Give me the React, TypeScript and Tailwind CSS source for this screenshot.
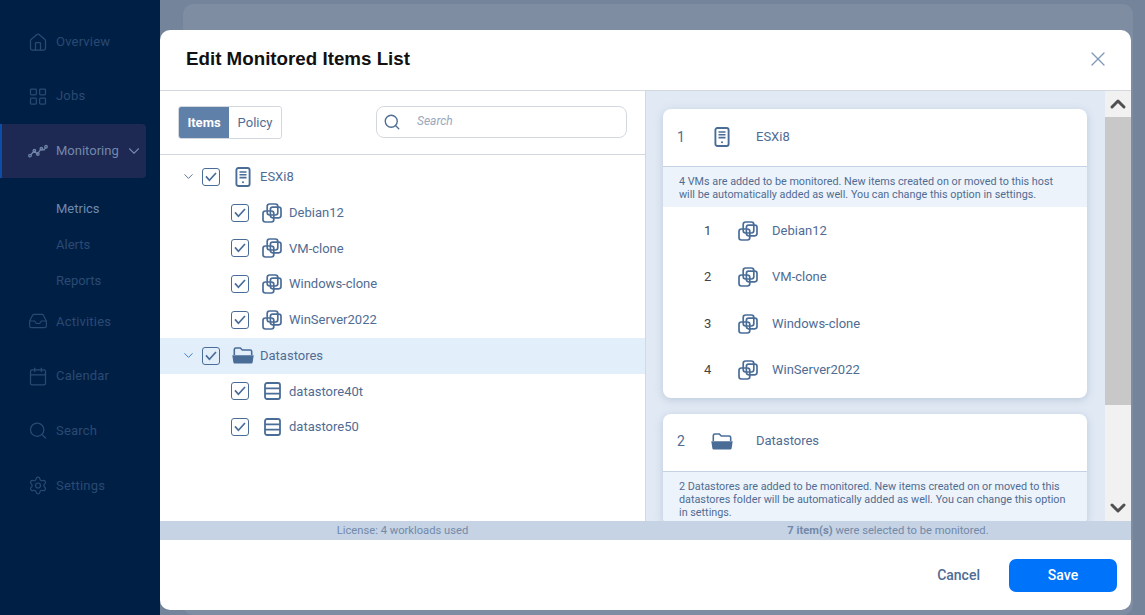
import React from 'react';
import { Calendar, ChevronDown, ChevronUp, Home, Inbox, LayoutGrid, Search, Settings, X } from 'lucide-react';

const BLUE = '#4a6d98';

const ServerIcon = () => (
    <svg width="16" height="20" viewBox="0 0 16 20" fill="none" stroke={BLUE} strokeWidth="1.9">
        <rect x="1.4" y="1" width="13.2" height="18" rx="2" />
        <path d="M4.5 5h7M4.5 7.8h7M4.5 10.6h7" strokeWidth="1.6" />
        <circle cx="8" cy="15.3" r="1" fill={BLUE} stroke="none" />
    </svg>
);

const VmIcon = () => (
    <svg width="20" height="20" viewBox="0 0 20 20" fill="none" stroke={BLUE} strokeWidth="1.7">
        <rect x="5.2" y="1" width="10.6" height="11" rx="2.4" />
        <rect x="8.4" y="4.2" width="10.6" height="10.6" rx="2.2" />
        <rect x="1" y="8" width="10.8" height="11" rx="2.4" />
    </svg>
);

const FolderIcon = () => (
    <svg width="22" height="17" viewBox="0 0 22 17" fill="none">
        <path d="M2.3 8V2.6C2.3 1.7 3 1 3.9 1h4.4l2 2h7.8c.9 0 1.6.7 1.6 1.6V8" stroke={BLUE} strokeWidth="1.6" />
        <path d="M0.3 8.2h21.4l-1 6.7c-.1.9-.9 1.6-1.8 1.6H3.1c-.9 0-1.7-.7-1.8-1.6z" fill={BLUE} />
    </svg>
);

const DatastoreIcon = () => (
    <svg width="17" height="18" viewBox="0 0 17 18" fill="none" stroke={BLUE} strokeWidth="1.8">
        <rect x="1" y="1" width="15" height="16" rx="2" />
        <path d="M1 6.3h15M1 11.7h15" />
    </svg>
);

const MonitoringIcon = () => (
    <svg width="20" height="14" viewBox="0 0 20 14" fill="none" stroke="#6f84a6" strokeWidth="1.3">
        <path d="M2.6 11 6 7.2l3.4 2.6L13 5.2l3 .8 1.8-2.6" />
        <circle cx="2" cy="11.6" r="1.3" />
        <circle cx="6.4" cy="6.8" r="1.3" />
        <circle cx="9.8" cy="10" r="1.3" />
        <circle cx="13.4" cy="4.8" r="1.3" />
        <circle cx="18" cy="2.8" r="1.3" />
    </svg>
);

const Check = () => (
    <span className="flex h-[18px] w-[18px] shrink-0 items-center justify-center rounded-[3px] border border-[#4a6d98]">
        <svg width="12" height="10" viewBox="0 0 12 10" fill="none" stroke="#4a6d98" strokeWidth="1.7">
            <path d="M1 4.4 4.4 8.2 11 1" />
        </svg>
    </span>
);

const navTop = [
    { label: 'Overview', icon: <Home size={21} strokeWidth={1.5} /> },
    { label: 'Jobs', icon: <LayoutGrid size={21} strokeWidth={1.5} /> },
];

const navBottom = [
    { label: 'Activities', icon: <Inbox size={22} strokeWidth={1.4} /> },
    { label: 'Calendar', icon: <Calendar size={21} strokeWidth={1.5} /> },
    { label: 'Search', icon: <Search size={21} strokeWidth={1.5} /> },
    { label: 'Settings', icon: <Settings size={23} strokeWidth={1.4} /> },
];

const vms = ['Debian12', 'VM-clone', 'Windows-clone', 'WinServer2022'];
const stores = ['datastore40t', 'datastore50'];

const NavRow = ({ label, icon, h }: { label: string; icon: React.ReactNode; h: string }) => (
    <div className={`flex items-center pl-[28px] text-[#2b4a72] ${h}`}>
        <span className="flex w-[20px] justify-center">{icon}</span>
        <span className="ml-[8px] text-[13px] tracking-[0.2px]">{label}</span>
    </div>
);

const Sidebar = () => (
    <aside className="w-[160px] shrink-0 bg-[#001f45] pt-[15px]">
        {navTop.map(n => <NavRow key={n.label} {...n} h="h-[54px]" />)}
        <div className="mt-[1px] flex h-[54px] w-[146px] items-center rounded-r-[4px] border-l-2 border-[#0b4ea8] bg-[#1d2853] pl-[26px] text-[#7288aa]">
            <MonitoringIcon />
            <span className="ml-[8px] text-[13px]">Monitoring</span>
            <ChevronDown size={18} strokeWidth={1.5} className="ml-[6px]" />
        </div>
        <div className="mt-[13px] pl-[56px] text-[13px]">
            <div className="flex h-9 items-center text-[#6f8ab0]">Metrics</div>
            <div className="flex h-9 items-center text-[#2b4a72]">Alerts</div>
            <div className="flex h-9 items-center text-[#2b4a72]">Reports</div>
        </div>
        <div className="-mt-[5px]">
            {navBottom.map(n => <NavRow key={n.label} {...n} h="h-[54.7px]" />)}
        </div>
    </aside>
);

const TreeParent = ({ label, icon, active }: { label: string; icon: React.ReactNode; active?: boolean }) => (
    <div className={`flex h-[35.75px] items-center pl-[21px] ${active ? 'bg-[#e3eefb]' : ''}`}>
        <ChevronDown size={15} strokeWidth={1.6} className={active ? 'text-[#3f7fd0]' : 'text-[#5d7799]'} />
        <span className="ml-[6px]"><Check /></span>
        <span className="ml-[12px] flex w-[22px] justify-center">{icon}</span>
        <span className="ml-[6px] text-[13px] text-[#4f6c93]">{label}</span>
    </div>
);

const TreeChild = ({ label, icon }: { label: string; icon: React.ReactNode }) => (
    <div className="flex h-[35.75px] items-center pl-[71px]">
        <Check />
        <span className="ml-[13px] flex w-[20px] justify-center">{icon}</span>
        <span className="ml-[7px] text-[13px] text-[#4f6c93]">{label}</span>
    </div>
);

const Card = ({ n, label, icon, note, children }: { n: number; label: string; icon: React.ReactNode; note: React.ReactNode; children?: React.ReactNode }) => (
    <div className="w-[424px] shrink-0 overflow-hidden rounded-[8px] bg-white shadow-[0_2px_8px_rgba(80,110,150,0.25)]">
        <div className="flex h-[58px] items-center border-b border-[#c3d3e3] pb-[1px] pl-[14px] text-[#4f6c93]">
            <span className="w-[34px] text-[14px]">{n}</span>
            <span className="flex w-[22px] justify-center">{icon}</span>
            <span className="-mt-[1px] ml-[23px] text-[13px]">{label}</span>
        </div>
        <div className="bg-[#edf3fa] pb-[6px] pl-[16px] pr-[12px] pt-[8px] text-[10.8px] leading-[13px] text-[#4f6c93]">{note}</div>
        {children}
    </div>
);

const Modal = () => (
    <div className="absolute left-[160px] top-[30px] flex h-[580px] w-[971px] flex-col overflow-hidden rounded-[10px] bg-white">
        <div className="flex h-[61px] shrink-0 items-center justify-between border-b border-[#d3d8df] pb-[2px] pl-[26px] pr-[21px]">
            <h1 className="font-['Liberation_Sans',sans-serif] text-[18.75px] font-bold text-[#111]">Edit Monitored Items List</h1>
            <X size={24} strokeWidth={1.3} className="text-[#7e97b8]" />
        </div>
        <div className="flex min-h-0 flex-1">
            <div className="w-[486px] shrink-0 border-r border-[#d3d8df]">
                <div className="flex h-[64px] items-start justify-between border-b border-[#d3d8df] pl-[18px] pr-[18px] pt-[15px]">
                    <div className="flex h-[33px] w-[104px] overflow-hidden rounded-[3px] border border-[#d3d8df] text-[13px]">
                        <span className="flex w-[50px] items-center justify-center bg-[#5f80a8] font-bold text-white">Items</span>
                        <span className="flex flex-1 items-center justify-center text-[#4f6c93]">Policy</span>
                    </div>
                    <div className="flex h-[32px] w-[251px] items-center rounded-[8px] border border-[#d3d8df] pl-[6px]">
                        <Search size={18} strokeWidth={1.8} className="text-[#4f6c93]" />
                        <span className="-mt-[3px] ml-[16px] text-[12px] italic text-[#98a8bd]">Search</span>
                    </div>
                </div>
                <div className="pt-[4px]">
                    <TreeParent label="ESXi8" icon={<ServerIcon />} />
                    {vms.map(v => <TreeChild key={v} label={v} icon={<VmIcon />} />)}
                    <TreeParent label="Datastores" icon={<FolderIcon />} active />
                    {stores.map(s => <TreeChild key={s} label={s} icon={<DatastoreIcon />} />)}
                </div>
            </div>
            <div className="flex min-w-0 flex-1 bg-[#e1e9f4]">
                <div className="flex min-w-0 flex-1 flex-col gap-[16px] overflow-hidden pl-[17px] pt-[18px]">
                    <Card
                        n={1}
                        label="ESXi8"
                        icon={<ServerIcon />}
                        note={<>4 VMs are added to be monitored. New items created on or moved to this host<br />will be automatically added as well. You can change this option in settings.</>}
                    >
                        <div className="pb-[4.4px] pt-[0.6px]">
                            {vms.map((v, i) => (
                                <div key={v} className="flex h-[46.4px] items-center pl-[41px] text-[13px]">
                                    <span className="w-[34px] text-[#444]">{i + 1}</span>
                                    <VmIcon />
                                    <span className="ml-[14px] text-[#4f6c93]">{v}</span>
                                </div>
                            ))}
                        </div>
                    </Card>
                    <Card
                        n={2}
                        label="Datastores"
                        icon={<FolderIcon />}
                        note={<>2 Datastores are added to be monitored. New items created on or moved to this<br />datastores folder will be automatically added as well. You can change this option<br />in settings.</>}
                    />
                </div>
                <div className="flex w-[26px] shrink-0 flex-col bg-[#f1f1f1]">
                    <div className="flex h-[26px] items-center justify-center">
                        <ChevronUp size={24} strokeWidth={3} className="text-[#505050]" />
                    </div>
                    <div className="h-[288px] bg-[#c8c8c8]" />
                    <div className="flex-1" />
                    <div className="flex h-[26px] items-center justify-center">
                        <ChevronDown size={24} strokeWidth={3} className="text-[#505050]" />
                    </div>
                </div>
            </div>
        </div>
        <div className="flex h-[19px] shrink-0 items-center bg-[#c5d3e5] pt-[1px] text-[11.2px] text-[#7389a8]">
            <span className="w-[485px] text-center">License: 4 workloads used</span>
            <span className="flex-1 text-center"><b>7 item(s)</b> were selected to be monitored.</span>
        </div>
        <div className="flex h-[70px] shrink-0 items-center justify-end pr-[14px] text-[14px] font-medium">
            <span className="text-[#4f6c93]">Cancel</span>
            <span className="ml-[29px] flex h-[33px] w-[108px] items-center justify-center rounded-[7px] bg-[#0073fb] text-white">Save</span>
        </div>
    </div>
);

export default function App() {
    return (
        <div className="relative flex h-screen overflow-hidden font-['Roboto',sans-serif]">
            <Sidebar />
            <main className="flex-1 bg-[#74849b] pl-[23px] pt-[4px]">
                <div className="h-full w-[950px] rounded-[10px] bg-[#7e8da1]" />
            </main>
            <Modal />
        </div>
    );
}
